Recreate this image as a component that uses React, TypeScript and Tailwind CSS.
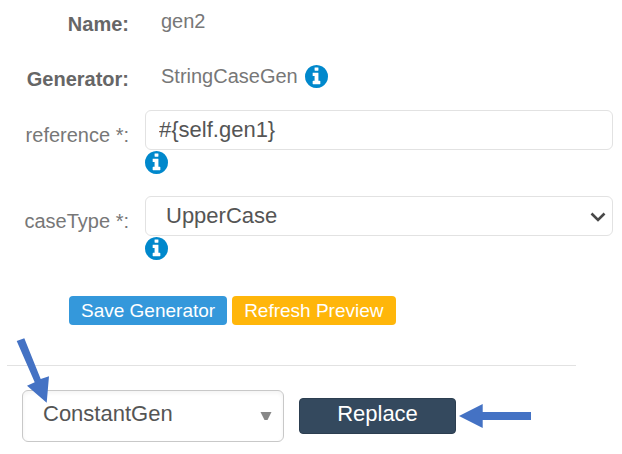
import type { ReactNode } from 'react'

const CASE_TYPES = ['UpperCase', 'LowerCase']
const GENERATORS = ['ConstantGen', 'StringCaseGen']

function InfoButton({ label }: { label: string }) {
  return (
    <button type="button" aria-label={label} className="block shrink-0 text-[#0088cc]">
      <svg viewBox="0 0 1536 1536" className="h-[23px] w-[23px]" fill="currentColor">
        <path d="M1024 1248v-160q0-14-9-23t-23-9h-96v-512q0-14-9-23t-23-9h-320q-14 0-23 9t-9 23v160q0 14 9 23t23 9h96v320h-96q-14 0-23 9t-9 23v160q0 14 9 23t23 9h448q14 0 23-9t9-23zm-128-896v-160q0-14-9-23t-23-9h-192q-14 0-23 9t-9 23v160q0 14 9 23t23 9h192q14 0 23-9t9-23zm640 416q0 209-103 385.5t-279.5 279.5-385.5 103-385.5-103-279.5-279.5-103-385.5 103-385.5 279.5-279.5 385.5-103 385.5 103 279.5 279.5 103 385.5z" />
      </svg>
    </button>
  )
}

function InfoRow({ label, children }: { label: string; children: ReactNode }) {
  return (
    <div className="flex gap-8">
      <dt className="w-[129px] shrink-0 pt-[3px] text-right font-bold text-[#666]">{label}</dt>
      <dd className="flex items-start gap-[7px]">{children}</dd>
    </div>
  )
}

function FieldRow({ id, label, children }: { id: string; label: string; children: ReactNode }) {
  return (
    <div className="flex gap-4">
      <label htmlFor={id} className="w-[129px] shrink-0 pt-[11px] text-right">
        {label} *:
      </label>
      <div className="min-w-0 flex-1">
        {children}
        <div className="mt-px">
          <InfoButton label={`About ${label}`} />
        </div>
      </div>
    </div>
  )
}

export default function App() {
  return (
    <main className="bg-white pt-[7px] font-['Liberation_Sans',Arial,sans-serif] text-xl leading-7 text-[#777]">
      <form onSubmit={(e) => e.preventDefault()}>
        <div className="pr-[9px]">
          <dl className="flex flex-col gap-6">
            <InfoRow label="Name:">gen2</InfoRow>
            <InfoRow label="Generator:">
              StringCaseGen
              <span className="pt-[3px]">
                <InfoButton label="About StringCaseGen" />
              </span>
            </InfoRow>
          </dl>

          <div className="mt-[17px] flex flex-col gap-[22px]">
            <FieldRow id="reference" label="reference">
              <input
                id="reference"
                type="text"
                defaultValue="#{self.gen1}"
                className="block h-10 w-full rounded-md border border-[#e2e2e2] bg-white px-[13px] text-[22px] text-[#555]"
              />
            </FieldRow>
            <FieldRow id="caseType" label="caseType">
              <div className="relative">
                <select
                  id="caseType"
                  className="block h-10 w-full appearance-none rounded-md border border-[#e2e2e2] bg-white px-5 text-[22px] text-[#555]"
                >
                  {CASE_TYPES.map((type) => (
                    <option key={type}>{type}</option>
                  ))}
                </select>
                <svg
                  viewBox="0 0 16 10"
                  className="pointer-events-none absolute right-[7px] top-4 h-2.5 w-4"
                  fill="none"
                  stroke="#484848"
                  strokeWidth="2.6"
                >
                  <path d="M1.5 1.5 8 8l6.5-6.5" />
                </svg>
              </div>
            </FieldRow>
          </div>
        </div>

        <div className="mt-9 flex gap-[5px] pl-[69px] text-[19px] text-white">
          <button type="submit" className="h-[29px] rounded bg-[#3498db] px-3">
            Save Generator
          </button>
          <button type="button" className="h-[29px] rounded bg-[#ffb60a] px-3">
            Refresh Preview
          </button>
        </div>
      </form>

      <hr className="ml-[7px] mr-[46px] mt-10 border-[#e2e2e2]" />

      <div className="mt-6 flex items-center pl-[22px] text-[22px]">
        <div className="relative">
          <select
            aria-label="Replacement generator"
            className="block h-[52px] w-[262px] appearance-none rounded-md border border-[#c8c8c8] bg-white pb-1 pl-5 pr-8 text-[#555] shadow-inner shadow-black/5"
          >
            {GENERATORS.map((name) => (
              <option key={name}>{name}</option>
            ))}
          </select>
          <svg viewBox="0 0 12 8" className="pointer-events-none absolute right-3 top-[22px] h-2 w-3" fill="#888">
            <path d="M.5 0h11L7.5 8h-3z" />
          </svg>
          <svg
            viewBox="0 0 34 66"
            className="pointer-events-none absolute -left-1.5 -top-[52px] h-[66px] w-[34px]"
            fill="#4472c4"
          >
            <path d="M.7 3 8.3.3l16.4 40.7 8.3-2.7-2.3 26.4L11 47.7l7.7-3.4z" />
          </svg>
        </div>
        <button
          type="button"
          className="ml-[15px] h-9 w-[157px] rounded border border-[#2c3e50] bg-[#34495e] pb-1 leading-7 text-white"
        >
          Replace
        </button>
        <svg viewBox="0 0 72 24" className="ml-[3px] h-6 w-[72px] shrink-0" fill="#4472c4">
          <path d="M0 12 23.7 0v8H72v8H23.7v8z" />
        </svg>
      </div>
    </main>
  )
}
